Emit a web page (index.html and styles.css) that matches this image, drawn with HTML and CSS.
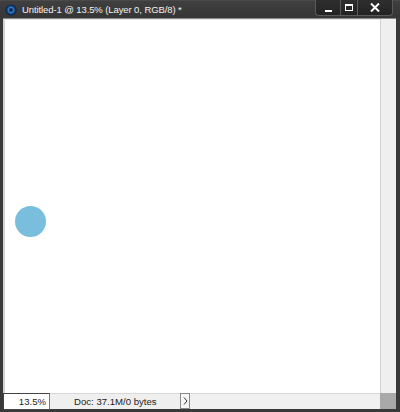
FILE: index.html
```html
<!DOCTYPE html>
<html>
<head>
<meta charset="utf-8">
<link rel="stylesheet" href="styles.css">
</head>
<body>
<div class="window">
  <div class="titlebar">
    <svg class="app-icon" width="12" height="12" viewBox="0 0 12 12">
      <defs>
        <radialGradient id="g" cx="50%" cy="50%" r="50%">
          <stop offset="0%" stop-color="#6fb6ff"/>
          <stop offset="45%" stop-color="#2f7fd6"/>
          <stop offset="75%" stop-color="#123a6b"/>
          <stop offset="100%" stop-color="#0b1f3a"/>
        </radialGradient>
      </defs>
      <circle cx="6" cy="6" r="5.6" fill="url(#g)"/>
      <circle cx="6" cy="6" r="2" fill="#0d2a50"/>
    </svg>
    <span class="title">Untitled-1 @ 13.5% (Layer 0, RGB/8) *</span>
    <div class="controls">
      <div class="btn btn-min"><span class="min-glyph"></span></div>
      <div class="btn btn-max"><span class="max-glyph"></span></div>
      <div class="btn btn-close">
        <svg width="10" height="9" viewBox="0 0 10 9"><path d="M1 0.5 L9 8.5 M9 0.5 L1 8.5" stroke="#fff" stroke-width="2"/></svg>
      </div>
    </div>
  </div>
  <div class="body">
    <div class="canvas-row">
      <div class="canvas">
        <div class="dot"></div>
      </div>
      <div class="vscroll"></div>
    </div>
    <div class="status">
      <div class="zoom">13.5%</div>
      <div class="doc">Doc: 37.1M/0 bytes</div>
      <div class="arrow">
        <svg width="5" height="8" viewBox="0 0 5 8"><path d="M1 0.5 L4 4 L1 7.5" stroke="#333" stroke-width="1" fill="none"/></svg>
      </div>
      <div class="hscroll"></div>
      <div class="corner"></div>
    </div>
  </div>
</div>
</body>
</html>
```
FILE: styles.css
```css
* { box-sizing: border-box; }
html, body { margin: 0; padding: 0; }
body {
  width: 400px;
  height: 412px;
  background: #3a3a3a;
  font-family: "Liberation Sans", Arial, sans-serif;
  overflow: hidden;
}
.window {
  width: 400px;
  height: 412px;
  display: flex;
  flex-direction: column;
  background: #393939;
  border-top: 1px solid #4a4a4a;
}
.titlebar {
  height: 17px;
  display: flex;
  align-items: flex-start;
  background: linear-gradient(#3f3f3f, #363636);
}
.app-icon {
  margin: 3px 0 0 5px;
  flex: none;
}
.title {
  margin-left: 5px;
  margin-top: 3px;
  font-size: 9.5px;
  line-height: 11px;
  color: #f2f2f2;
  letter-spacing: -0.1px;
  white-space: nowrap;
}
.controls {
  margin-left: auto;
  margin-right: 7px;
  display: flex;
  height: 16px;
  margin-top: -1px;
}
.btn {
  height: 16px;
  background: linear-gradient(#2e2e2e, #232323);
  border: 1px solid #5a5a5a;
  border-top: none;
  display: flex;
  align-items: center;
  justify-content: center;
}
.btn-min { width: 25px; border-radius: 0 0 0 4px; border-right: none; }
.btn-max { width: 17px; border-right: none; }
.btn-close { width: 36px; border-radius: 0 0 4px 0; }
.min-glyph {
  width: 7px;
  height: 2px;
  background: #fff;
  margin-top: 7px;
}
.max-glyph {
  width: 8px;
  height: 7px;
  border: 1px solid #fff;
  border-top-width: 2px;
}
.body {
  flex: 1;
  display: flex;
  flex-direction: column;
  padding: 0 4px 3px 3px;
}
.canvas-row {
  flex: 1;
  display: flex;
  border-top: 1px solid #8a8a8a;
}
.canvas {
  flex: 1;
  background: #ffffff;
  border-left: 2px solid #d4d4d4;
  border-top: 1px solid #e6e6e6;
  position: relative;
}
.dot {
  position: absolute;
  left: 10px;
  top: 186px;
  width: 31px;
  height: 31px;
  border-radius: 50%;
  background: #79bedc;
}
.vscroll {
  width: 16px;
  background: #efefef;
  border-left: 1px solid #d2d2d2;
}
.status {
  height: 16px;
  display: flex;
  background: #efefef;
  font-size: 9.6px;
  color: #222;
}
.zoom {
  width: 47px;
  height: 17px;
  background: #fff;
  border: 1px solid #444;
  border-right-color: #777;
  text-align: right;
  padding-right: 3px;
  line-height: 16px;
}
.doc {
  width: 130px;
  padding-left: 24px;
  white-space: nowrap;
  border-top: 1px solid #d8d8d8;
  line-height: 15px;
}
.arrow {
  width: 10px;
  height: 16px;
  background: #f6f6f6;
  border: 1px solid #8a8a8a;
  display: flex;
  align-items: center;
  justify-content: center;
}
.hscroll {
  flex: 1;
  background: #f0f0f0;
  border-top: 1px solid #d8d8d8;
}
.corner {
  width: 16px;
  background: #a9a9a9;
}
```
